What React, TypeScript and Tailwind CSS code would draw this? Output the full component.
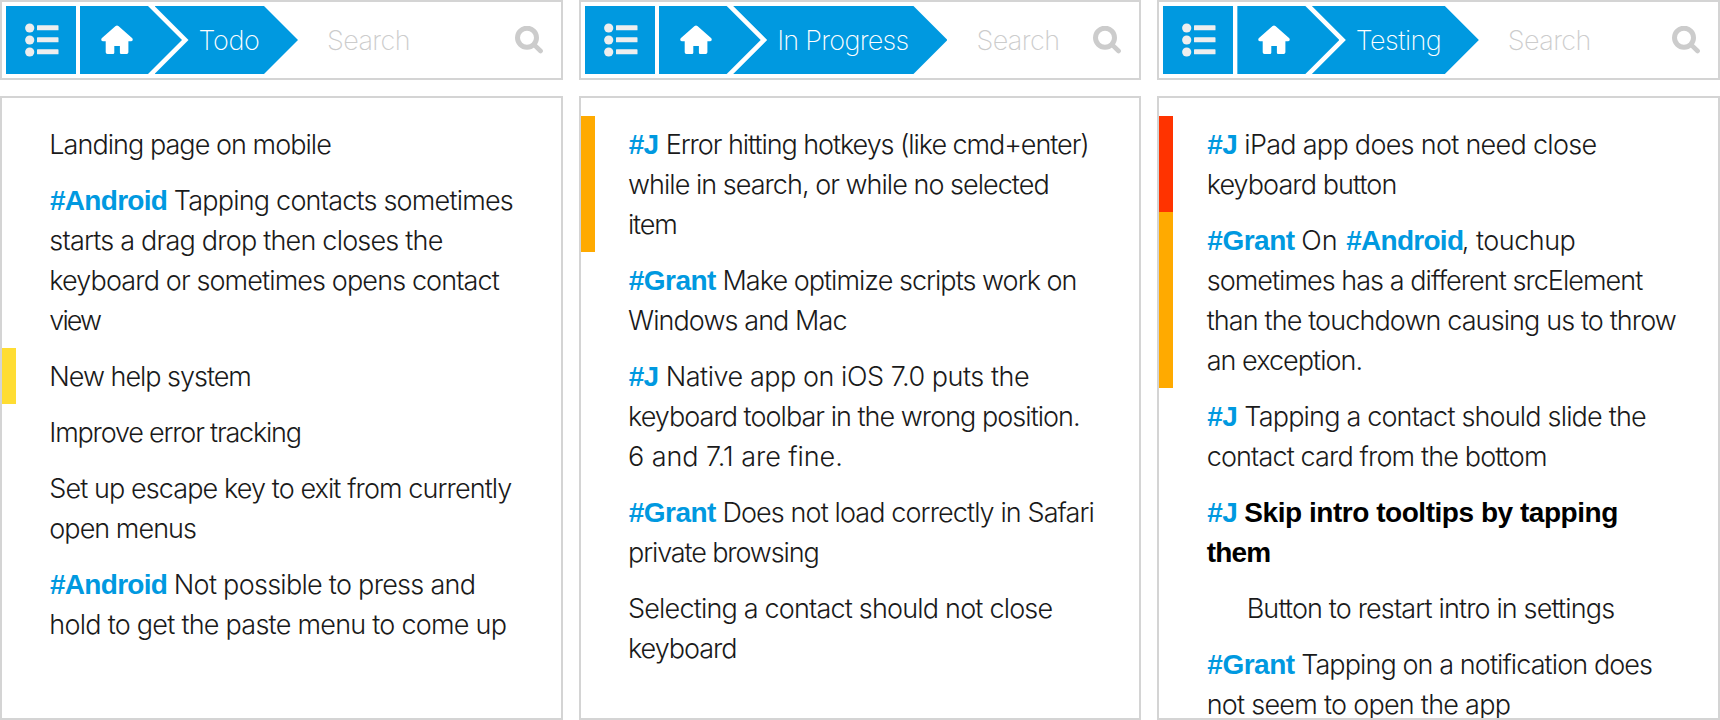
import type { ReactNode } from "react";

type TagName = "#Android" | "#Grant" | "#J";

const tagStyles: Record<TagName, string> = {
  "#Android": "w-[124.5px] tracking-[-0.72px]",
  "#Grant": "w-[94.5px] tracking-[-0.5px]",
  "#J": "w-[37.7px] tracking-[-0.7px]",
};

function Tag({ name }: { name: TagName }) {
  return (
    <span className={`inline-block pl-[0.7px] font-['Liberation_Sans',sans-serif] text-[28px] font-bold text-[#0099e0] ${tagStyles[name]}`}>
      {name}
    </span>
  );
}

function Line({ tag, track = "tracking-[-0.9px]", children }: { tag?: TagName; track?: string; children: ReactNode }) {
  return (
    <span className="block h-10 whitespace-nowrap leading-[41px]">
      {tag && <Tag name={tag} />}
      <span className={track}>{children}</span>
    </span>
  );
}

function Item({ bar = "border-transparent", indent = "pl-[33.33px]", children }: { bar?: string; indent?: string; children: ReactNode }) {
  return <li className={`border-l-[14px] py-2 ${bar} ${indent}`}>{children}</li>;
}

function ListIcon() {
  return (
    <svg width="34" height="34" viewBox="0 0 34 34" fill="#eeeeee" className="block">
      <circle cx="4.7" cy="5" r="4.6" />
      <circle cx="4.7" cy="17" r="4.6" />
      <circle cx="4.7" cy="29" r="4.6" />
      <rect x="12" y="2.3" width="21.5" height="5" rx="0.6" />
      <rect x="12" y="14.3" width="21.5" height="5" rx="0.6" />
      <rect x="12" y="26.3" width="21.5" height="5" rx="0.6" />
    </svg>
  );
}

function HomeIcon() {
  return (
    <svg width="32" height="30" viewBox="0 0 32 30" fill="#ffffff" className="block">
      <path d="M14.6 1.1Q16 0 17.4 1.1L31.3 13.2Q32.6 15.8 30.2 16.2H27.4V27.2Q27.4 29 25.6 29H20.2Q18.9 29 18.9 27.7V21H13.3V27.7Q13.3 29 12 29H6.5Q4.7 29 4.7 27.2V16.2H1.8Q-0.6 15.8 0.7 13.2Z" />
    </svg>
  );
}

function SearchIcon() {
  return (
    <svg width="28" height="28" viewBox="0 0 28 28" fill="none" stroke="#cccccc" className="block">
      <circle cx="12" cy="11.7" r="9.5" strokeWidth="5" />
      <path d="M19 18.6L25.6 25" strokeWidth="4.6" strokeLinecap="round" />
    </svg>
  );
}

function Column({ title, titleStyle, children }: { title: string; titleStyle: string; children: ReactNode }) {
  return (
    <section className="flex h-[720px] min-w-0 flex-1 flex-col gap-4">
      <header className="flex h-20 shrink-0 items-center border-2 border-[#d4d4d4] p-1">
        <button className="flex h-[68px] w-[70px] shrink-0 items-center bg-[#0099e0] pl-[19px]">
          <ListIcon />
        </button>
        <div className="ml-1 flex h-[68px] w-[102px] shrink-0 items-center bg-[#0099e0] pl-[21px] [clip-path:polygon(0_0,68px_0,102px_34px,68px_68px,0_68px)]">
          <HomeIcon />
        </div>
        <div className="-ml-[27.5px] flex h-[68px] shrink-0 items-center bg-[#0099e0] pl-[44px] pr-[38px] [clip-path:polygon(0_0,calc(100%-34px)_0,100%_34px,calc(100%-34px)_68px,0_68px,34px_34px)]">
          <h1 className={`whitespace-nowrap pt-0.5 font-extralight text-white ${titleStyle}`}>{title}</h1>
        </div>
        <div className="ml-[29px] flex-1 pt-0.5 font-extralight tracking-[-0.6px] text-[#cccccc]">Search</div>
        <div className="pr-[14px]">
          <SearchIcon />
        </div>
      </header>
      <ul className="min-h-0 flex-1 overflow-hidden border-2 border-[#d4d4d4] pt-[18px]">{children}</ul>
    </section>
  );
}

export default function App() {
  return (
    <main className="flex h-[720px] w-[1720px] gap-4 overflow-hidden bg-white font-['Inter',sans-serif] text-[27px] font-light leading-10 text-[#1a1a1a]">
      <Column title="Todo" titleStyle="w-[61.5px] tracking-[-0.35px]">
        <Item>
          <Line track="tracking-[-0.96px]">Landing page on mobile</Line>
        </Item>
        <Item>
          <Line tag="#Android" track="tracking-[-0.79px]">Tapping contacts sometimes</Line>
          <Line track="tracking-[-0.79px]">starts a drag drop then closes the</Line>
          <Line track="tracking-[-0.88px]">keyboard or sometimes opens contact</Line>
          <Line track="tracking-[-1.9px]">view</Line>
        </Item>
        <Item bar="border-[#ffdd33]">
          <Line track="tracking-[-1.02px]">New help system</Line>
        </Item>
        <Item>
          <Line track="tracking-[-1.2px]">Improve error tracking</Line>
        </Item>
        <Item>
          <Line track="tracking-[-0.91px]">Set up escape key to exit from currently</Line>
          <Line track="tracking-[-0.97px]">open menus</Line>
        </Item>
        <Item>
          <Line tag="#Android" track="tracking-[-0.72px]">Not possible to press and</Line>
          <Line track="tracking-[-0.75px]">hold to get the paste menu to come up</Line>
        </Item>
      </Column>

      <Column title="In Progress" titleStyle="w-[132.3px] tracking-[-0.72px]">
        <Item bar="border-[#ffaa00]">
          <Line tag="#J" track="tracking-[-1.06px]">Error hitting hotkeys (like cmd+enter)</Line>
          <Line track="tracking-[-0.97px]">while in search, or while no selected</Line>
          <Line track="tracking-[-1.2px]">item</Line>
        </Item>
        <Item>
          <Line tag="#Grant" track="tracking-[-0.97px]">Make optimize scripts work on</Line>
          <Line track="tracking-[-0.92px]">Windows and Mac</Line>
        </Item>
        <Item>
          <Line tag="#J" track="tracking-[-0.46px]">Native app on iOS 7.0 puts the</Line>
          <Line track="tracking-[-0.97px]">keyboard toolbar in the wrong position.</Line>
          <Line track="tracking-[-0.05px]">6 and 7.1 are fine.</Line>
        </Item>
        <Item>
          <Line tag="#Grant" track="tracking-[-0.9px]">Does not load correctly in Safari</Line>
          <Line track="tracking-[-1.13px]">private browsing</Line>
        </Item>
        <Item>
          <Line track="tracking-[-0.81px]">Selecting a contact should not close</Line>
          <Line track="tracking-[-1.05px]">keyboard</Line>
        </Item>
      </Column>

      <Column title="Testing" titleStyle="w-[85px] tracking-[-0.55px]">
        <Item bar="border-[#ff3300]">
          <Line tag="#J" track="tracking-[-0.71px]">iPad app does not need close</Line>
          <Line track="tracking-[-0.93px]">keyboard button</Line>
        </Item>
        <Item bar="border-[#ffaa00]">
          <Line tag="#Grant" track="tracking-[-0.5px]">
            <span className="inline-block w-[44.3px] tracking-normal">On</span>
            <span className="inline-block w-[116.3px]">
              <Tag name="#Android" />
            </span>
            , touchup
          </Line>
          <Line track="tracking-[-0.96px]">sometimes has a different srcElement</Line>
          <Line track="tracking-[-0.89px]">than the touchdown causing us to throw</Line>
          <Line track="tracking-[-0.96px]">an exception.</Line>
        </Item>
        <Item>
          <Line tag="#J" track="tracking-[-0.82px]">Tapping a contact should slide the</Line>
          <Line track="tracking-[-0.86px]">contact card from the bottom</Line>
        </Item>
        <Item>
          <Line tag="#J" track="font-['Liberation_Sans',sans-serif] text-[28px] font-bold tracking-[-0.46px] text-black">
            Skip intro tooltips by tapping
          </Line>
          <Line track="font-['Liberation_Sans',sans-serif] text-[28px] font-bold tracking-[-0.8px] text-black">them</Line>
        </Item>
        <Item indent="pl-[73.33px]">
          <Line track="tracking-[-0.86px]">Button to restart intro in settings</Line>
        </Item>
        <Item>
          <Line tag="#Grant" track="tracking-[-0.91px]">Tapping on a notification does</Line>
          <Line track="tracking-[-0.74px]">not seem to open the app</Line>
        </Item>
      </Column>
    </main>
  );
}
